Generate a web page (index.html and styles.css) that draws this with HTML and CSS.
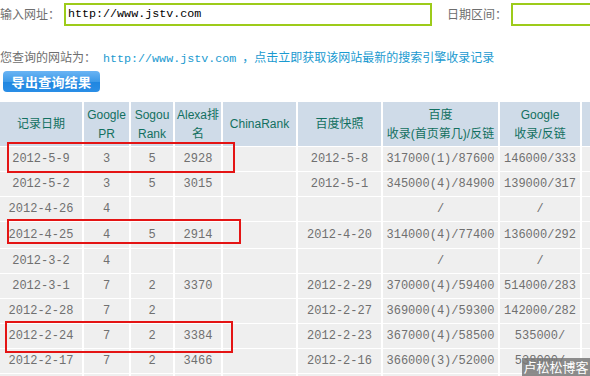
FILE: index.html
```html
<!DOCTYPE html>
<html lang="zh-CN">
<head>
<meta charset="utf-8">
<title>收录查询</title>
<link rel="stylesheet" href="styles.css">
</head>
<body>
<div class="page">
  <div class="query">
    <span class="lbl">输入网址：</span>
    <div class="field url">http://www.jstv.com</div>
    <span class="lbl date-lbl">日期区间：</span>
    <div class="field date"></div>
  </div>
  <p class="notice">您查询的网站为：<a class="site">http://www.jstv.com</a><a class="link">，点击立即获取该网站最新的搜索引擎收录记录</a></p>
  <button class="export">导出查询结果</button>
  <div class="table-wrap">
    <table class="records">
      <colgroup>
        <col class="c-date"><col class="c-pr"><col class="c-sogou"><col class="c-alexa"><col class="c-china"><col class="c-snap"><col class="c-baidu"><col class="c-google"><col class="c-more">
      </colgroup>
      <thead>
        <tr>
          <th>记录日期</th>
          <th>Google<br>PR</th>
          <th>Sogou<br>Rank</th>
          <th>Alexa排<br>名</th>
          <th>ChinaRank</th>
          <th>百度快照</th>
          <th>百度<br>收录(首页第几)/反链</th>
          <th>Google<br>收录/反链</th>
          <th></th>
        </tr>
      </thead>
      <tbody>
        <tr><td>2012-5-9</td><td>3</td><td>5</td><td>2928</td><td></td><td>2012-5-8</td><td>317000(1)/87600</td><td>146000/333</td><td></td></tr>
        <tr><td>2012-5-2</td><td>3</td><td>5</td><td>3015</td><td></td><td>2012-5-1</td><td>345000(4)/84900</td><td>139000/317</td><td></td></tr>
        <tr><td>2012-4-26</td><td>4</td><td></td><td></td><td></td><td></td><td>/</td><td>/</td><td></td></tr>
        <tr class="tall"><td>2012-4-25</td><td>4</td><td>5</td><td>2914</td><td></td><td>2012-4-20</td><td>314000(4)/77400</td><td>136000/292</td><td></td></tr>
        <tr><td>2012-3-2</td><td>4</td><td></td><td></td><td></td><td></td><td>/</td><td>/</td><td></td></tr>
        <tr><td>2012-3-1</td><td>7</td><td>2</td><td>3370</td><td></td><td>2012-2-29</td><td>370000(4)/59400</td><td>514000/283</td><td></td></tr>
        <tr><td>2012-2-28</td><td>7</td><td>2</td><td></td><td></td><td>2012-2-27</td><td>369000(4)/59300</td><td>142000/282</td><td></td></tr>
        <tr><td>2012-2-24</td><td>7</td><td>2</td><td>3384</td><td></td><td>2012-2-23</td><td>367000(4)/58500</td><td>535000/</td><td></td></tr>
        <tr><td>2012-2-17</td><td>7</td><td>2</td><td>3466</td><td></td><td>2012-2-16</td><td>366000(3)/52000</td><td>538000/</td><td></td></tr>
        <tr><td></td><td></td><td></td><td></td><td></td><td></td><td></td><td></td><td></td></tr>
      </tbody>
    </table>
    <div class="mark m1"></div>
    <div class="mark m2"></div>
    <div class="mark m3"></div>
  </div>
</div>
<div class="watermark">卢松松博客</div>
</body>
</html>
```

FILE: styles.css
```css
html, body {
  margin: 0;
  padding: 0;
  background: #fff;
}
body {
  width: 590px;
  height: 376px;
  overflow: hidden;
  position: relative;
  font-family: "Liberation Sans", "Noto Sans CJK SC", sans-serif;
  font-size: 12px;
  color: #666;
}
.page {
  width: 590px;
  overflow: hidden;
}
.query {
  display: flex;
  align-items: center;
  height: 23px;
  margin-top: 3px;
}
.lbl {
  color: #6e6e6e;
  font-size: 12px;
  line-height: 14px;
  white-space: nowrap;
}
.field {
  box-sizing: border-box;
  height: 23px;
  border: 2px solid #9dcb1a;
  background: #fff;
  font-family: "Liberation Mono", monospace;
  font-size: 11.7px;
  line-height: 19px;
  color: #000;
  padding-left: 2px;
  flex: none;
}
.url {
  width: 368px;
  margin-left: 4px;
}
.date-lbl {
  margin-left: 15px;
}
.date {
  width: 120px;
  margin-left: 4px;
}
.notice {
  margin: 25px 0 0 0;
  height: 14px;
  line-height: 14px;
  white-space: nowrap;
  color: #6e6e6e;
}
.site {
  font-family: "Liberation Mono", monospace;
  font-size: 11.7px;
  color: #1a9ad0;
  margin-left: 7px;
  margin-right: 6px;
}
.link {
  color: #1a9ad0;
}
.export {
  display: block;
  margin: 6px 0 0 3px;
  width: 97px;
  height: 21px;
  padding: 0;
  border: 0;
  border-radius: 4px;
  background: linear-gradient(#6ab4f4, #3d9ae8 50%, #1f86e0 51%, #2a8ee6);
  color: #fff;
  font-family: "Noto Sans CJK SC", sans-serif;
  font-weight: bold;
  font-size: 13px;
  line-height: 21px;
  letter-spacing: 0.3px;
}
.table-wrap {
  position: relative;
  margin-top: 10px;
  height: 274px;
  overflow: hidden;
}
.records {
  border-collapse: collapse;
  table-layout: fixed;
  width: 681px;
}
.c-date { width: 83px; }
.c-pr { width: 47px; }
.c-sogou { width: 44px; }
.c-alexa { width: 48px; }
.c-china { width: 75px; }
.c-snap { width: 85px; }
.c-baidu { width: 117px; }
.c-google { width: 82px; }
.c-more { width: 100px; }
.records th,
.records td {
  padding: 0;
  border-right: 2px solid #fff;
  border-bottom: 1px solid #fff;
  text-align: center;
  vertical-align: middle;
  white-space: nowrap;
  overflow: hidden;
}
.records th {
  height: 43px;
  padding-top: 1px;
  background: #cfdbe8;
  color: #127060;
  font-weight: normal;
  font-size: 12px;
  line-height: 19px;
}
.records td {
  height: 24px;
  background: #efefef;
  font-family: "Liberation Mono", monospace;
  font-size: 12px;
  color: #707070;
}
.records tr.tall td {
  height: 26px;
}
.mark {
  position: absolute;
  box-sizing: border-box;
  border: 2px solid #e41414;
}
.m1 { left: 7px; top: 40px; width: 228px; height: 31px; }
.m2 { left: 7px; top: 117px; width: 234px; height: 25px; }
.m3 { left: 5px; top: 219px; width: 228px; height: 32px; }
.watermark {
  position: absolute;
  left: 522px;
  top: 358px;
  width: 68px;
  height: 18px;
  background: rgba(120, 120, 120, 0.85);
  color: #fff;
  font-family: "Noto Sans CJK SC", sans-serif;
  font-size: 13px;
  line-height: 18px;
  text-align: center;
  white-space: nowrap;
}
```
